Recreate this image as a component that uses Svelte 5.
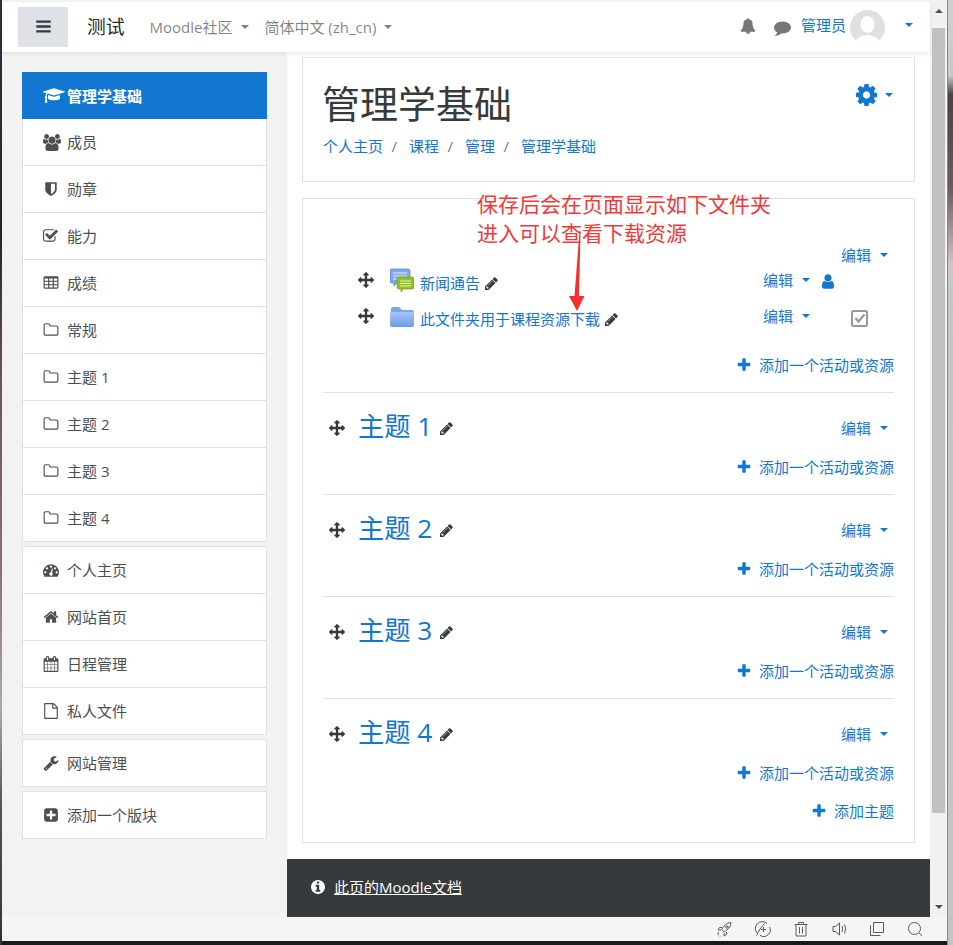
<script>
    const fa = {
        bars: 'M1664 1344v128q0 26-19 45t-45 19h-1408q-26 0-45-19t-19-45v-128q0-26 19-45t45-19h1408q26 0 45 19t19 45zm0-512v128q0 26-19 45t-45 19h-1408q-26 0-45-19t-19-45v-128q0-26 19-45t45-19h1408q26 0 45 19t19 45zm0-512v128q0 26-19 45t-45 19h-1408q-26 0-45-19t-19-45v-128q0-26 19-45t45-19h1408q26 0 45 19t19 45z',
        bell: 'M912 1696q0-16-16-16-59 0-101.5-42.5t-42.5-101.5q0-16-16-16t-16 16q0 73 51.5 124.5t124.5 51.5q16 0 16-16zm816-288q0 52-38 90t-90 38h-448q0 106-75 181t-181 75-181-75-75-181h-448q-52 0-90-38t-38-90q50-42 91-88t85-119.5 74.5-158.5 50-206 19.5-260q0-152 117-282.5t307-158.5q-8-19-8-39 0-40 28-68t68-28 68 28 28 68q0 20-8 39 190 28 307 158.5t117 282.5q0 139 19.5 260t50 206 74.5 158.5 85 119.5 91 88z',
        comment: 'M1792 896q0 174-120 321.5t-326 233-450 85.5q-70 0-145-8-198 175-460 242-49 14-114 22-17 2-30.5-9t-17.5-29v-1q-3-4-.5-12t2-10 4.5-9.5l6-9 7-8.5 8-9q7-8 31-34.5t34.5-38 31-39.5 32.5-51 27-59 26-76q-157-89-247.5-220t-90.5-281q0-130 71-248.5t191-204.5 286-136.5 348-50.5q244 0 450 85.5t326 233 120 321.5z',
        cog: 'M1152 896q0-106-75-181t-181-75-181 75-75 181 75 181 181 75 181-75 75-181zm512-109v222q0 12-8 23t-20 13l-185 28q-19 54-39 91 35 50 107 138 10 12 10 25t-9 23q-27 37-99 108t-94 71q-12 0-26-9l-138-108q-44 23-91 38-16 136-29 186-7 28-36 28h-222q-14 0-24.5-8.5t-11.5-21.5l-28-184q-49-16-90-37l-141 107q-10 9-25 9-14 0-25-11-126-114-165-168-7-10-7-23 0-12 8-23 15-21 51-66.5t54-70.5q-27-50-41-99l-183-27q-13-2-21-12.5t-8-23.5v-222q0-12 8-23t19-13l186-28q14-46 39-92-40-57-107-138-10-12-10-24 0-10 9-23 26-36 98.5-107.5t94.5-71.5q13 0 26 10l138 107q44-23 91-38 16-136 29-186 7-28 36-28h222q14 0 24.5 8.5t11.5 21.5l28 184q49 16 90 37l142-107q9-9 24-9 13 0 25 10 129 119 165 170 7 8 7 22 0 12-8 23-15 21-51 66.5t-54 70.5q26 50 41 98l183 28q13 2 21 12.5t8 23.5z',
        pencil: 'M491 1536l91-91-235-235-91 91v107h128v128h107zm523-928q0-22-22-22-10 0-17 7l-542 542q-7 7-7 17 0 22 22 22 10 0 17-7l542-542q7-7 7-17zm-54-192l416 416-832 832h-416v-416zm683 96q0 53-37 90l-166 166-416-416 166-165q36-38 90-38 53 0 91 38l235 234q37 39 37 91z',
        arrows: 'M1792 896q0 26-19 45l-256 256q-19 19-45 19t-45-19-19-45v-128h-384v384h128q26 0 45 19t19 45-19 45l-256 256q-19 19-45 19t-45-19l-256-256q-19-19-19-45t19-45 45-19h128v-384h-384v128q0 26-19 45t-45 19-45-19l-256-256q-19-19-19-45t19-45l256-256q19-19 45-19t45 19 19 45v128h384v-384h-128q-26 0-45-19t-19-45 19-45l256-256q19-19 45-19t45 19l256 256q19 19 19 45t-19 45-45 19h-128v384h384v-128q0-26 19-45t45-19 45 19l256 256q19 19 19 45z',
        plus: 'M1600 736v192q0 40-28 68t-68 28h-416v416q0 40-28 68t-68 28h-192q-40 0-68-28t-28-68v-416h-416q-40 0-68-28t-28-68v-192q0-40 28-68t68-28h416v-416q0-40 28-68t68-28h192q40 0 68 28t28 68v416h416q40 0 68 28t28 68z',
        user: 'M1536 1399q0 109-62.5 187t-150.5 78h-854q-88 0-150.5-78t-62.5-187q0-85 8.5-160.5t31.5-152 58.5-131 94-89 134.5-34.5q131 128 313 128t313-128q76 0 134.5 34.5t94 89 58.5 131 31.5 152 8.5 160.5zm-256-887q0 159-112.5 271.5t-271.5 112.5-271.5-112.5-112.5-271.5 112.5-271.5 271.5-112.5 271.5 112.5 112.5 271.5z',
        check: 'M1408 930v318q0 119-84.5 203.5t-203.5 84.5h-832q-119 0-203.5-84.5t-84.5-203.5v-832q0-119 84.5-203.5t203.5-84.5h832q63 0 117 25 15 7 18 23 3 17-9 29l-49 49q-10 10-23 10-3 0-9-2-23-6-45-6h-832q-66 0-113 47t-47 113v832q0 66 47 113t113 47h832q66 0 113-47t47-113v-254q0-13 9-22l64-64q10-10 23-10 6 0 12 3 20 8 20 29zm231-489l-814 814q-24 24-57 24t-57-24l-430-430q-24-24-24-57t24-57l110-110q24-24 57-24t57 24l263 263 647-647q24-24 57-24t57 24l110 110q24 24 24 57t-24 57z',
        table: 'M576 1376v-192q0-14-9-23t-23-9h-320q-14 0-23 9t-9 23v192q0 14 9 23t23 9h320q14 0 23-9t9-23zm0-384v-192q0-14-9-23t-23-9h-320q-14 0-23 9t-9 23v192q0 14 9 23t23 9h320q14 0 23-9t9-23zm512 384v-192q0-14-9-23t-23-9h-320q-14 0-23 9t-9 23v192q0 14 9 23t23 9h320q14 0 23-9t9-23zm-512-768v-192q0-14-9-23t-23-9h-320q-14 0-23 9t-9 23v192q0 14 9 23t23 9h320q14 0 23-9t9-23zm512 384v-192q0-14-9-23t-23-9h-320q-14 0-23 9t-9 23v192q0 14 9 23t23 9h320q14 0 23-9t9-23zm512 384v-192q0-14-9-23t-23-9h-320q-14 0-23 9t-9 23v192q0 14 9 23t23 9h320q14 0 23-9t9-23zm-512-768v-192q0-14-9-23t-23-9h-320q-14 0-23 9t-9 23v192q0 14 9 23t23 9h320q14 0 23-9t9-23zm512 384v-192q0-14-9-23t-23-9h-320q-14 0-23 9t-9 23v192q0 14 9 23t23 9h320q14 0 23-9t9-23zm0-384v-192q0-14-9-23t-23-9h-320q-14 0-23 9t-9 23v192q0 14 9 23t23 9h320q14 0 23-9t9-23zm128-320v1088q0 66-47 113t-113 47h-1344q-66 0-113-47t-47-113v-1088q0-66 47-113t113-47h1344q66 0 113 47t47 113z',
        folder: 'M1600 1312v-704q0-40-28-68t-68-28h-704q-40 0-68-28t-28-68v-64q0-40-28-68t-68-28h-320q-40 0-68 28t-28 68v960q0 40 28 68t68 28h1216q40 0 68-28t28-68zm128-704v704q0 92-66 158t-158 66h-1216q-92 0-158-66t-66-158v-960q0-92 66-158t158-66h320q92 0 158 66t66 158v32h672q92 0 158 66t66 158z',
        home: 'M1472 992v480q0 26-19 45t-45 19h-384v-384h-256v384h-384q-26 0-45-19t-19-45v-480q0-1 .5-3t.5-3l575-474 575 474q1 2 1 6zm223-69l-62 74q-8 9-21 11h-3q-13 0-21-7l-692-577-692 577q-12 8-24 7-13-2-21-11l-62-74q-8-10-7-23.5t11-21.5l719-599q32-26 76-26t76 26l244 204v-195q0-14 9-23t23-9h192q14 0 23 9t9 23v408l219 182q10 8 11 21.5t-7 23.5z',
        calendar: 'M192 1664h288v-288h-288v288zm352 0h320v-288h-320v288zm-352-352h288v-320h-288v320zm352 0h320v-320h-320v320zm-352-384h288v-288h-288v288zm736 736h320v-288h-320v288zm-384-736h320v-288h-320v288zm768 736h288v-288h-288v288zm-384-352h320v-320h-320v320zm-352-864v-288q0-13-9.5-22.5t-22.5-9.5h-64q-13 0-22.5 9.5t-9.5 22.5v288q0 13 9.5 22.5t22.5 9.5h64q13 0 22.5-9.5t9.5-22.5zm736 864h288v-320h-288v320zm-384-384h320v-288h-320v288zm384 0h288v-288h-288v288zm32-480v-288q0-13-9.5-22.5t-22.5-9.5h-64q-13 0-22.5 9.5t-9.5 22.5v288q0 13 9.5 22.5t22.5 9.5h64q13 0 22.5-9.5t9.5-22.5zm384-64v1280q0 52-38 90t-90 38h-1408q-52 0-90-38t-38-90v-1280q0-52 38-90t90-38h128v-96q0-66 47-113t113-47h64q66 0 113 47t47 113v96h384v-96q0-66 47-113t113-47h64q66 0 113 47t47 113v96h128q52 0 90 38t38 90z',
        file: 'M1596 380q28 28 48 76t20 88v1152q0 40-28 68t-68 28h-1344q-40 0-68-28t-28-68v-1600q0-40 28-68t68-28h896q40 0 88 20t76 48zm-444-244v376h376q-10-29-22-41l-313-313q-12-12-41-22zm384 1528v-1024h-416q-40 0-68-28t-28-68v-416h-768v1536h1280z',
        wrench: 'M448 1472q0-26-19-45t-45-19-45 19-19 45 19 45 45 19 45-19 19-45zm644-420l-682 682q-37 37-90 37-52 0-91-37l-106-108q-38-36-38-90 0-53 38-91l681-681q39 98 114.5 173.5t173.5 114.5zm634-435q0 39-23 106-47 134-164.5 217.5t-258.5 83.5q-185 0-316.5-131.5t-131.5-316.5 131.5-316.5 316.5-131.5q58 0 121.5 16.5t107.5 46.5q16 11 16 28t-16 28l-293 169v224l193 107q5-3 79-48.5t135.5-81 70.5-35.5q15 0 23.5 10t8.5 25z',
        plusSquare: 'M1408 960v-128q0-26-19-45t-45-19h-320v-320q0-26-19-45t-45-19h-128q-26 0-45 19t-19 45v320h-320q-26 0-45 19t-19 45v128q0 26 19 45t45 19h320v320q0 26 19 45t45 19h128q26 0 45-19t19-45v-320h320q26 0 45-19t19-45zm256-544v960q0 119-84.5 203.5t-203.5 84.5h-960q-119 0-203.5-84.5t-84.5-203.5v-960q0-119 84.5-203.5t203.5-84.5h960q119 0 203.5 84.5t84.5 203.5z',
        info: 'M1152 1376v-160q0-14-9-23t-23-9h-96v-512q0-14-9-23t-23-9h-320q-14 0-23 9t-9 23v160q0 14 9 23t23 9h96v320h-96q-14 0-23 9t-9 23v160q0 14 9 23t23 9h448q14 0 23-9t9-23zm-128-896v-160q0-14-9-23t-23-9h-192q-14 0-23 9t-9 23v160q0 14 9 23t23 9h192q14 0 23-9t9-23zm640 416q0 209-103 385.5t-279.5 279.5-385.5 103-385.5-103-279.5-279.5-103-385.5 103-385.5 279.5-279.5 385.5-103 385.5 103 279.5 279.5 103 385.5z',
        dashboard: 'M384 1152q0-53-37.5-90.5t-90.5-37.5-90.5 37.5-37.5 90.5 37.5 90.5 90.5 37.5 90.5-37.5 37.5-90.5zm192-448q0-53-37.5-90.5t-90.5-37.5-90.5 37.5-37.5 90.5 37.5 90.5 90.5 37.5 90.5-37.5 37.5-90.5zm428 481l101-382q6-26-7.5-48.5t-38.5-29.5-48 6.5-30 39.5l-101 382q-60 5-107 43.5t-63 98.5q-20 77 20 146t117 89 146-20 89-117q16-60-6-117t-72-91zm660-33q0-53-37.5-90.5t-90.5-37.5-90.5 37.5-37.5 90.5 37.5 90.5 90.5 37.5 90.5-37.5 37.5-90.5zm-640-640q0-53-37.5-90.5t-90.5-37.5-90.5 37.5-37.5 90.5 37.5 90.5 90.5 37.5 90.5-37.5 37.5-90.5zm448 192q0-53-37.5-90.5t-90.5-37.5-90.5 37.5-37.5 90.5 37.5 90.5 90.5 37.5 90.5-37.5 37.5-90.5zm320 448q0 261-141 483-19 29-54 29h-1402q-35 0-54-29-141-221-141-483 0-182 71-348t191-286 286-191 348-71 348 71 286 191 191 286 71 348z',
        users: 'M593 896q-162 5-265 128h-134q-82 0-138-40.5t-56-118.5q0-353 124-353 6 0 43.5 21t97.5 42.5 119 21.5q67 0 133-23-5 37-5 66 0 139 81 256zm1071 637q0 120-73 189.5t-194 69.5h-874q-121 0-194-69.5t-73-189.5q0-53 3.5-103.5t14-109 26.5-108.5 43-97.5 62-81 85.5-53.5 111.5-20q10 0 43 21.5t73 48 107 48 135 21.5 135-21.5 107-48 73-48 43-21.5q61 0 111.5 20t85.5 53.5 62 81 43 97.5 26.5 108.5 14 109 3.5 103.5zm-1024-1277q0 106-75 181t-181 75-181-75-75-181 75-181 181-75 181 75 75 181zm704 384q0 159-112.5 271.5t-271.5 112.5-271.5-112.5-112.5-271.5 112.5-271.5 271.5-112.5 271.5 112.5 112.5 271.5zm576 225q0 78-56 118.5t-138 40.5h-134q-103-123-265-128 81-117 81-256 0-29-5-66 66 23 133 23 59 0 119-21.5t97.5-42.5 43.5-21q124 0 124 353zm-128-609q0 106-75 181t-181 75-181-75-75-181 75-181 181-75 181 75 75 181z',
        cap: 'M1774 836l18 316q4 69-82 128t-235 93.5-323 34.5-323-34.5-235-93.5-82-128l18-316 574 181q22 7 48 7t48-7zm530-324q0 23-22 31l-1120 352q-4 1-10 1t-10-1l-652-206q-43 34-71 111.5t-34 178.5q63 36 63 109 0 69-58 107l58 433q2 14-8 25-9 11-24 11h-192q-15 0-24-11-10-11-8-25l58-433q-58-38-58-107 0-73 65-111 11-207 98-330l-333-104q-22-8-22-31t22-31l1120-352q4-1 10-1t10 1l1120 352q22 8 22 31z',
        shield: 'M1344 960v-640h-448v1137q119-63 213-137 235-184 235-360zm192-768v768q0 86-33.5 170.5t-83 150-118 127.5-126.5 103-121 77.5-89.5 49.5-42.5 20q-12 6-26 6t-26-6q-16-7-42.5-20t-89.5-49.5-121-77.5-126.5-103-118-127.5-83-150-33.5-170.5v-768q0-26 19-45t45-19h1152q26 0 45 19t19 45z'
    };

    // width of the glyph box, most of them are 1792 wide
    const wide = { cap: 2304, users: 1920 };
    const box = (name) => `0 0 ${wide[name] || 1792} 1792`;

    const groups = [
        { cls: 'g1', items: [
            { icon: 'cap', text: '管理学基础', active: true },
            { icon: 'users', text: '成员' },
            { icon: 'shield', text: '勋章' },
            { icon: 'check', text: '能力' },
            { icon: 'table', text: '成绩' },
            { icon: 'folder', text: '常规' },
            { icon: 'folder', text: '主题 1' },
            { icon: 'folder', text: '主题 2' },
            { icon: 'folder', text: '主题 3' },
            { icon: 'folder', text: '主题 4' }
        ]},
        { cls: 'g2', items: [
            { icon: 'dashboard', text: '个人主页' },
            { icon: 'home', text: '网站首页' },
            { icon: 'calendar', text: '日程管理' },
            { icon: 'file', text: '私人文件' }
        ]},
        { cls: 'g3', items: [{ icon: 'wrench', text: '网站管理' }] },
        { cls: 'g4', items: [{ icon: 'plusSquare', text: '添加一个版块' }] }
    ];

    const topics = ['主题 1', '主题 2', '主题 3', '主题 4'];
    const crumbs = ['个人主页', '课程', '管理', '管理学基础'];
</script>

<div class="screen">
    <div class="edge-left"></div>

    <div class="window">
        <div class="viewport">
            <div class="page">
                <header class="navbar">
                    <button class="burger" aria-label="menu">
                        <svg class="ico i16" viewBox="0 0 1792 1792"><path d={fa.bars} /></svg>
                    </button>
                    <span class="brand">测试</span>
                    <span class="nav-link">Moodle社区<i class="caret gray"></i></span>
                    <span class="nav-link lang">简体中文 (zh_cn)<i class="caret gray"></i></span>
                    <div class="nav-right">
                        <svg class="ico bell" viewBox="0 0 1792 1792"><path d={fa.bell} /></svg>
                        <svg class="ico comment" viewBox="0 0 1792 1792"><path d={fa.comment} /></svg>
                        <span class="admin">管理员</span>
                        <svg class="avatar" viewBox="0 0 35 35">
                            <defs><clipPath id="av"><circle cx="17.5" cy="17.5" r="17.5" /></clipPath></defs>
                            <circle cx="17.5" cy="17.5" r="17.5" fill="#e0e0e0" />
                            <g clip-path="url(#av)" fill="#fff">
                                <ellipse cx="17.5" cy="14.5" rx="7" ry="8.5" />
                                <ellipse cx="17.5" cy="34" rx="13" ry="9" />
                            </g>
                        </svg>
                        <i class="caret blue big"></i>
                    </div>
                </header>

                <div class="below">
                    <aside class="sidebar">
                        {#each groups as group}
                            <nav class="group {group.cls}">
                                {#each group.items as item}
                                    <div class="item" class:active={item.active}>
                                        <span class="item-icon">
                                            <svg class="ico" class:cap={item.icon === 'cap'} class:users={item.icon === 'users'} viewBox={box(item.icon)}><path d={fa[item.icon]} /></svg>
                                        </span>
                                        {item.text}
                                    </div>
                                {/each}
                            </nav>
                        {/each}
                    </aside>

                    <div class="content">
                        <main class="main">
                            <section class="card head-card">
                                <div class="title-row">
                                    <h1>管理学基础</h1>
                                    <div class="gear">
                                        <svg class="ico" viewBox="232 128 1328 1536"><path d={fa.cog} /></svg>
                                        <i class="caret blue"></i>
                                    </div>
                                </div>
                                <div class="crumbs">
                                    {#each crumbs as crumb, i}
                                        {#if i > 0}<span class="sep">/</span>{/if}
                                        <span class="link">{crumb}</span>
                                    {/each}
                                </div>
                            </section>

                            <section class="card course">
                                <div class="general">
                                    <div class="edit-line"><span class="link">编辑</span><i class="caret blue"></i></div>
                                    <div class="activity forum">
                                        <svg class="ico move" viewBox="0 0 1792 1792"><path d={fa.arrows} /></svg>
                                        <svg class="mod" viewBox="0 0 24 24">
                                            <path d="M2 1h16q2 0 2 2v10q0 2-2 2H7l-3 3v-3H2q-2 0-2-2V3q0-2 2-2z" fill="#7fa8e8" stroke="#4f7fcf" stroke-width=".7" />
                                            <path d="M3 5h14M3 8h14M3 11h8" stroke="#e6efff" stroke-width="1.2" />
                                            <path d="M9 9h13q2 0 2 2v8q0 2-2 2h-9l-2 3v-3H9q-2 0-2-2v-8q0-2 2-2z" fill="#8fc31f" stroke="#6d9c12" stroke-width=".7" />
                                            <path d="M10 13h11M10 15.5h11M10 18h11" stroke="#eaf6c8" stroke-width="1.1" />
                                        </svg>
                                        <span class="link name">新闻通告</span>
                                        <svg class="ico pencil" viewBox="0 0 1792 1792"><path d={fa.pencil} /></svg>
                                        <div class="act-edit"><span class="link">编辑</span><i class="caret blue"></i></div>
                                        <svg class="ico person" viewBox="256 128 1280 1536"><path d={fa.user} /></svg>
                                    </div>
                                    <div class="activity resource">
                                        <svg class="ico move" viewBox="0 0 1792 1792"><path d={fa.arrows} /></svg>
                                        <svg class="mod" viewBox="0 0 24 20">
                                            <defs>
                                                <linearGradient id="fold" x1="0" y1="0" x2="0" y2="1">
                                                    <stop offset="0" stop-color="#a9c6f5" />
                                                    <stop offset="1" stop-color="#6c9be6" />
                                                </linearGradient>
                                            </defs>
                                            <path d="M1 2q0-2 2-2h6l3 3h10q2 0 2 2v2H1z" fill="#7ea6e6" />
                                            <path d="M0 6q0-1 1-1h22q1 0 1 1v12q0 2-2 2H2q-2 0-2-2z" fill="url(#fold)" />
                                        </svg>
                                        <span class="link name">此文件夹用于课程资源下载</span>
                                        <svg class="ico pencil" viewBox="0 0 1792 1792"><path d={fa.pencil} /></svg>
                                        <div class="act-edit"><span class="link">编辑</span><i class="caret blue"></i></div>
                                        <svg class="checked" viewBox="0 0 17 17">
                                            <rect x="1" y="1" width="15" height="15" rx="1.5" fill="none" stroke="#999" stroke-width="2" />
                                            <path d="M4.500 8 7.500 11.500 13.500 4.500" fill="none" stroke="#999" stroke-width="2.200" />
                                        </svg>
                                    </div>
                                    <div class="add"><svg class="ico plus" viewBox="0 0 1792 1792"><path d={fa.plus} /></svg><span class="link">添加一个活动或资源</span></div>
                                </div>

                                {#each topics as topic}
                                    <div class="topic">
                                        <div class="topic-head">
                                            <svg class="ico move" viewBox="0 0 1792 1792"><path d={fa.arrows} /></svg>
                                            <h3>{topic}</h3>
                                            <svg class="ico pencil" viewBox="0 0 1792 1792"><path d={fa.pencil} /></svg>
                                            <div class="topic-edit"><span class="link">编辑</span><i class="caret blue"></i></div>
                                        </div>
                                        <div class="add"><svg class="ico plus" viewBox="0 0 1792 1792"><path d={fa.plus} /></svg><span class="link">添加一个活动或资源</span></div>
                                    </div>
                                {/each}

                                <div class="add add-topic"><svg class="ico plus" viewBox="0 0 1792 1792"><path d={fa.plus} /></svg><span class="link">添加主题</span></div>
                            </section>
                        </main>

                        <footer class="footer">
                            <svg class="ico info" viewBox="128 128 1536 1536"><path d={fa.info} /></svg>
                            <span class="doc">此页的Moodle文档</span>
                        </footer>
                    </div>
                </div>
            </div>

            <div class="scrollbar">
                <i class="arrow up"></i>
                <div class="thumb"></div>
                <i class="arrow down"></i>
            </div>
        </div>

        <div class="statusbar">
            <svg viewBox="0 0 16 16"><path d="M6 10 4.500 8.500 8 4q2.500-2.500 6-2.500 0 3.500-2.500 6L7.500 11zM5 6.500H2.500L1 9h3M9.500 11v2.500L7 15v-3M2 11l-1 1v2M3.500 15h-1" /><circle cx="10" cy="6" r="1.200" /></svg>
            <svg viewBox="0 0 16 16"><path d="M2.500 12.500A6.500 6.500 0 0 1 12 2.500M5 14.300A6.500 6.500 0 0 0 14.500 6M1.500 14.500 5 8l4.500-5.500M8.500 6v5M6 8.500h5" /></svg>
            <svg viewBox="0 0 16 16"><path d="M1.500 3.500h13M5.500 3.500V1.500h5v2M3 3.500V15h10V3.500M6.500 6v6.500M9.500 6v6.500" /></svg>
            <svg viewBox="0 0 16 16"><path d="M2 5.500v5h2.500L8.500 14V2L4.500 5.500zM11 5q1.500 3 0 6M13.500 3.500q2.500 4.500 0 9" /></svg>
            <svg viewBox="0 0 16 16"><path d="M4.500 1.500h10v10h-10zM1.500 4.500v10h10" /></svg>
            <svg viewBox="0 0 16 16"><circle cx="7.500" cy="7.500" r="6" /><path d="m12 12 3 3" /></svg>
        </div>
        <div class="taskbar"></div>
    </div>

    <div class="edge-right"></div>

    <!-- red note pasted on top of the screenshot -->
    <div class="note">
        <p>保存后会在页面显示如下文件夹</p>
        <p>进入可以查看下载资源</p>
    </div>
    <svg class="note-arrow" viewBox="0 0 20 84"><path d="M11.500 0 12.500 0 11 65H16.500L9 80 1 65H6.500z" /></svg>
</div>

<style>
    :global(body) {
        margin: 0;
        background: #1a1a1a;
    }

    .screen {
        width: 953px;
        height: 945px;
        display: flex;
        position: relative;
        overflow: hidden;
        font-family: "Open Sans", "Noto Sans CJK SC", sans-serif;
        font-size: 15px;
        line-height: 22px;
        color: #373a3c;
    }

    .edge-left {
        width: 2px;
        background: linear-gradient(#2c333b 0, #23252a 25%, #6b5356 40%, #8a6f72 60%, #b0a8a8 75%, #555 85%, #333 100%);
    }

    .edge-right {
        width: 6px;
        background: linear-gradient(#d0d0d0 0, #c8c8c8 8%, #4d4046 10%, #6b5a62 20%, #d2c3c8 28%, #c6c8c8 30%, #c3c5c5 100%);
        border-left: 1px solid #8a8a8a;
        box-sizing: border-box;
    }

    .window {
        width: 945px;
        display: flex;
        flex-direction: column;
        background: #f5f5f5;
    }

    .viewport {
        flex: 1;
        display: flex;
        min-height: 0;
    }

    .page {
        width: 928px;
        display: flex;
        flex-direction: column;
        background: #f2f2f2;
    }

    /* navbar */
    .navbar {
        height: 50px;
        margin-top: 2px;
        display: flex;
        align-items: center;
        background: #fff;
        box-shadow: 0 2px 4px rgba(0, 0, 0, .08);
        position: relative;
    }

    .burger {
        width: 50px;
        height: 40px;
        margin-left: 16px;
        margin-top: -1px;
        padding: 0;
        border: 0;
        background: #dee2e6;
        display: flex;
        align-items: center;
        justify-content: center;
    }

    .ico {
        display: block;
        fill: currentColor;
        flex: none;
    }

    .i16 {
        width: 17px;
        height: 17px;
        color: #343a40;
    }

    .brand {
        margin-left: 19px;
        margin-top: -1px;
        font-size: 18.75px;
        color: #26292c;
    }

    .nav-link {
        margin-left: 25px;
        color: rgba(0, 0, 0, .5);
        display: flex;
        align-items: center;
    }

    .nav-link.lang {
        margin-left: 15px;
    }

    .lang .caret {
        margin-left: 8px;
    }

    .caret {
        display: inline-block;
        width: 0;
        height: 0;
        margin-left: 9px;
        border-left: 4px solid transparent;
        border-right: 4px solid transparent;
        border-top: 4px solid currentColor;
    }

    .caret.gray {
        color: rgba(0, 0, 0, .5);
    }

    .caret.blue {
        color: #1177d1;
    }

    .caret.big {
        margin-left: 20px;
        border-left-width: 4.5px;
        border-right-width: 4.5px;
        margin-top: -4px;
    }

    .nav-right {
        margin-left: auto;
        margin-right: 17px;
        display: flex;
        align-items: center;
    }

    .bell {
        width: 16px;
        height: 16px;
        color: #777;
        margin-top: -2px;
    }

    .comment {
        width: 17px;
        height: 17px;
        color: #777;
        margin-left: 18px;
        margin-top: 1px;
    }

    .admin {
        margin-left: 10px;
        margin-top: -4px;
        color: #1177d1;
    }

    .avatar {
        width: 35px;
        height: 35px;
        margin-left: 4px;
        margin-top: 1px;
        display: block;
    }

    /* left column */
    .below {
        flex: 1;
        display: flex;
        min-height: 0;
    }

    .sidebar {
        width: 285px;
        box-sizing: border-box;
        padding: 20px 20px 0;
        flex: none;
    }

    .group {
        background: #fff;
        border: solid #dee2e6;
        border-width: 1px 1px 0;
    }

    .g1 {
        border-top: 0;
    }

    .g2,
    .g3,
    .g4 {
        margin-top: 4px;
    }

    .item {
        height: 47px;
        box-sizing: border-box;
        display: flex;
        align-items: center;
        border-bottom: 1px solid #dee2e6;
        padding-left: 20px;
        color: #4a4f54;
    }

    .item.active {
        background: #1177d1;
        color: #fff;
        font-weight: 700;
        border-bottom: 0;
        margin: 0 -1px;
        padding-left: 21px;
    }

    .item-icon {
        width: 24px;
        flex: none;
        display: flex;
    }

    .item-icon .ico {
        width: 16px;
        height: 16px;
    }

    .item-icon .ico.cap {
        width: 22px;
        height: 17px;
    }

    .item-icon .ico.users {
        width: 18px;
        height: 17px;
    }

    /* right column */
    .content {
        flex: 1;
        display: flex;
        flex-direction: column;
        min-width: 0;
    }

    .main {
        flex: 1;
        background: #fff;
        padding: 5px 15px 16px;
        display: flex;
        flex-direction: column;
        gap: 16px;
    }

    .card {
        border: 1px solid #dee2e6;
        background: #fff;
    }

    .head-card {
        height: 125px;
        box-sizing: border-box;
        padding: 20px 20px 0;
    }

    .title-row {
        display: flex;
        justify-content: space-between;
    }

    h1 {
        margin: 0 0 0 -1px;
        font-size: 38px;
        line-height: 50px;
        font-weight: 400;
        color: #373a3c;
    }

    .gear {
        display: flex;
        align-items: center;
        color: #1177d1;
        height: 34px;
        margin-right: 1px;
    }

    .gear .ico {
        width: 21px;
        height: 22px;
    }

    .gear .caret {
        margin-left: 8px;
    }

    .crumbs {
        margin-top: 7px;
        display: flex;
    }

    .sep {
        margin: 0 12px 0 8.5px;
        color: #6c757d;
    }

    .link {
        color: #1177d1;
    }

    .course {
        flex: 1;
        padding: 0 20px;
        box-sizing: border-box;
    }

    .general {
        padding: 45px 0 16px;
    }

    .edit-line {
        display: flex;
        align-items: center;
        justify-content: flex-end;
        margin-right: 6px;
    }

    .activity {
        height: 35px;
        display: flex;
        align-items: center;
        padding-left: 35px;
    }

    .forum {
        margin-top: -2px;
    }

    .resource {
        margin-top: 1px;
    }

    .move {
        width: 16px;
        height: 16px;
        color: #343a40;
    }

    .activity .move {
        margin-top: -3px;
    }

    .mod {
        width: 24px;
        height: 24px;
        margin-left: 16px;
        flex: none;
    }

    .forum .mod {
        margin-top: -3px;
    }

    .resource .mod {
        margin-top: -1px;
    }

    .name {
        margin-left: 6px;
        margin-top: 3px;
    }

    .pencil {
        width: 15px;
        height: 15px;
        color: #343a40;
        margin-left: 4px;
    }

    .activity .pencil {
        margin-top: 3px;
    }

    .act-edit {
        margin-left: auto;
        margin-top: -4px;
        display: flex;
        align-items: center;
        margin-right: 84px;
    }

    .person {
        width: 12px;
        height: 15px;
        color: #1177d1;
        margin-left: -72px;
        margin-right: 60px;
    }

    .checked {
        width: 17px;
        height: 17px;
        flex: none;
        margin-left: -43px;
        margin-right: 26px;
        margin-top: 2px;
    }

    .add {
        display: flex;
        align-items: center;
        justify-content: flex-end;
        margin-top: 19px;
    }

    .plus {
        width: 16px;
        height: 16px;
        color: #1177d1;
        margin-right: 7px;
    }

    .topic {
        border-top: 1px solid #dee2e6;
        padding: 16px 0;
    }

    .topic-head {
        height: 34px;
        display: flex;
        align-items: center;
        padding-left: 6px;
    }

    h3 {
        margin: 0 0 0 13px;
        font-size: 26.25px;
        line-height: 34px;
        font-weight: 400;
        color: #1177d1;
    }

    .topic-head .pencil {
        margin-left: 7px;
        margin-top: 4px;
    }

    .topic-head .move {
        margin-top: 4px;
    }

    .topic-edit {
        margin-left: auto;
        margin-right: 6px;
        margin-top: 4px;
        display: flex;
        align-items: center;
    }

    .topic .add {
        margin-top: 13px;
    }

    .add-topic {
        margin-top: 0;
    }

    .footer {
        height: 58px;
        background: #373a3c;
        display: flex;
        align-items: center;
        padding: 0 0 2px 24px;
        box-sizing: border-box;
        color: #fff;
    }

    .info {
        width: 14px;
        height: 14px;
    }

    .doc {
        margin-left: 9px;
        text-decoration: underline;
    }

    /* browser chrome */
    .scrollbar {
        width: 17px;
        flex: none;
        background: #f1f1f1;
        display: flex;
        flex-direction: column;
        align-items: center;
    }

    .thumb {
        width: 13px;
        height: 785px;
        background: #c1c1c1;
        margin-top: 5px;
    }

    .arrow {
        width: 0;
        height: 0;
        border-left: 4px solid transparent;
        border-right: 4px solid transparent;
    }

    .arrow.up {
        border-bottom: 4px solid #505050;
        margin-top: 9px;
        margin-bottom: 10px;
    }

    .arrow.down {
        border-top: 4px solid #505050;
        margin-top: 92px;
    }

    .statusbar {
        height: 24px;
        flex: none;
        background: #f5f5f5;
        display: flex;
        align-items: center;
        justify-content: flex-end;
        gap: 22px;
        padding-right: 24px;
    }

    .statusbar svg {
        width: 16px;
        height: 16px;
        fill: none;
        stroke: #5a5a5a;
        stroke-width: 1;
    }

    .taskbar {
        height: 4px;
        flex: none;
        background: #1a1a1a;
    }

    /* annotation */
    .note {
        position: absolute;
        left: 477px;
        top: 190px;
        font-size: 21px;
        line-height: 29px;
        color: #f0393b;
        white-space: nowrap;
    }

    .note p {
        margin: 0;
    }

    .note-arrow {
        position: absolute;
        left: 568px;
        top: 231px;
        width: 20px;
        height: 84px;
        fill: #f5302f;
    }
</style>
